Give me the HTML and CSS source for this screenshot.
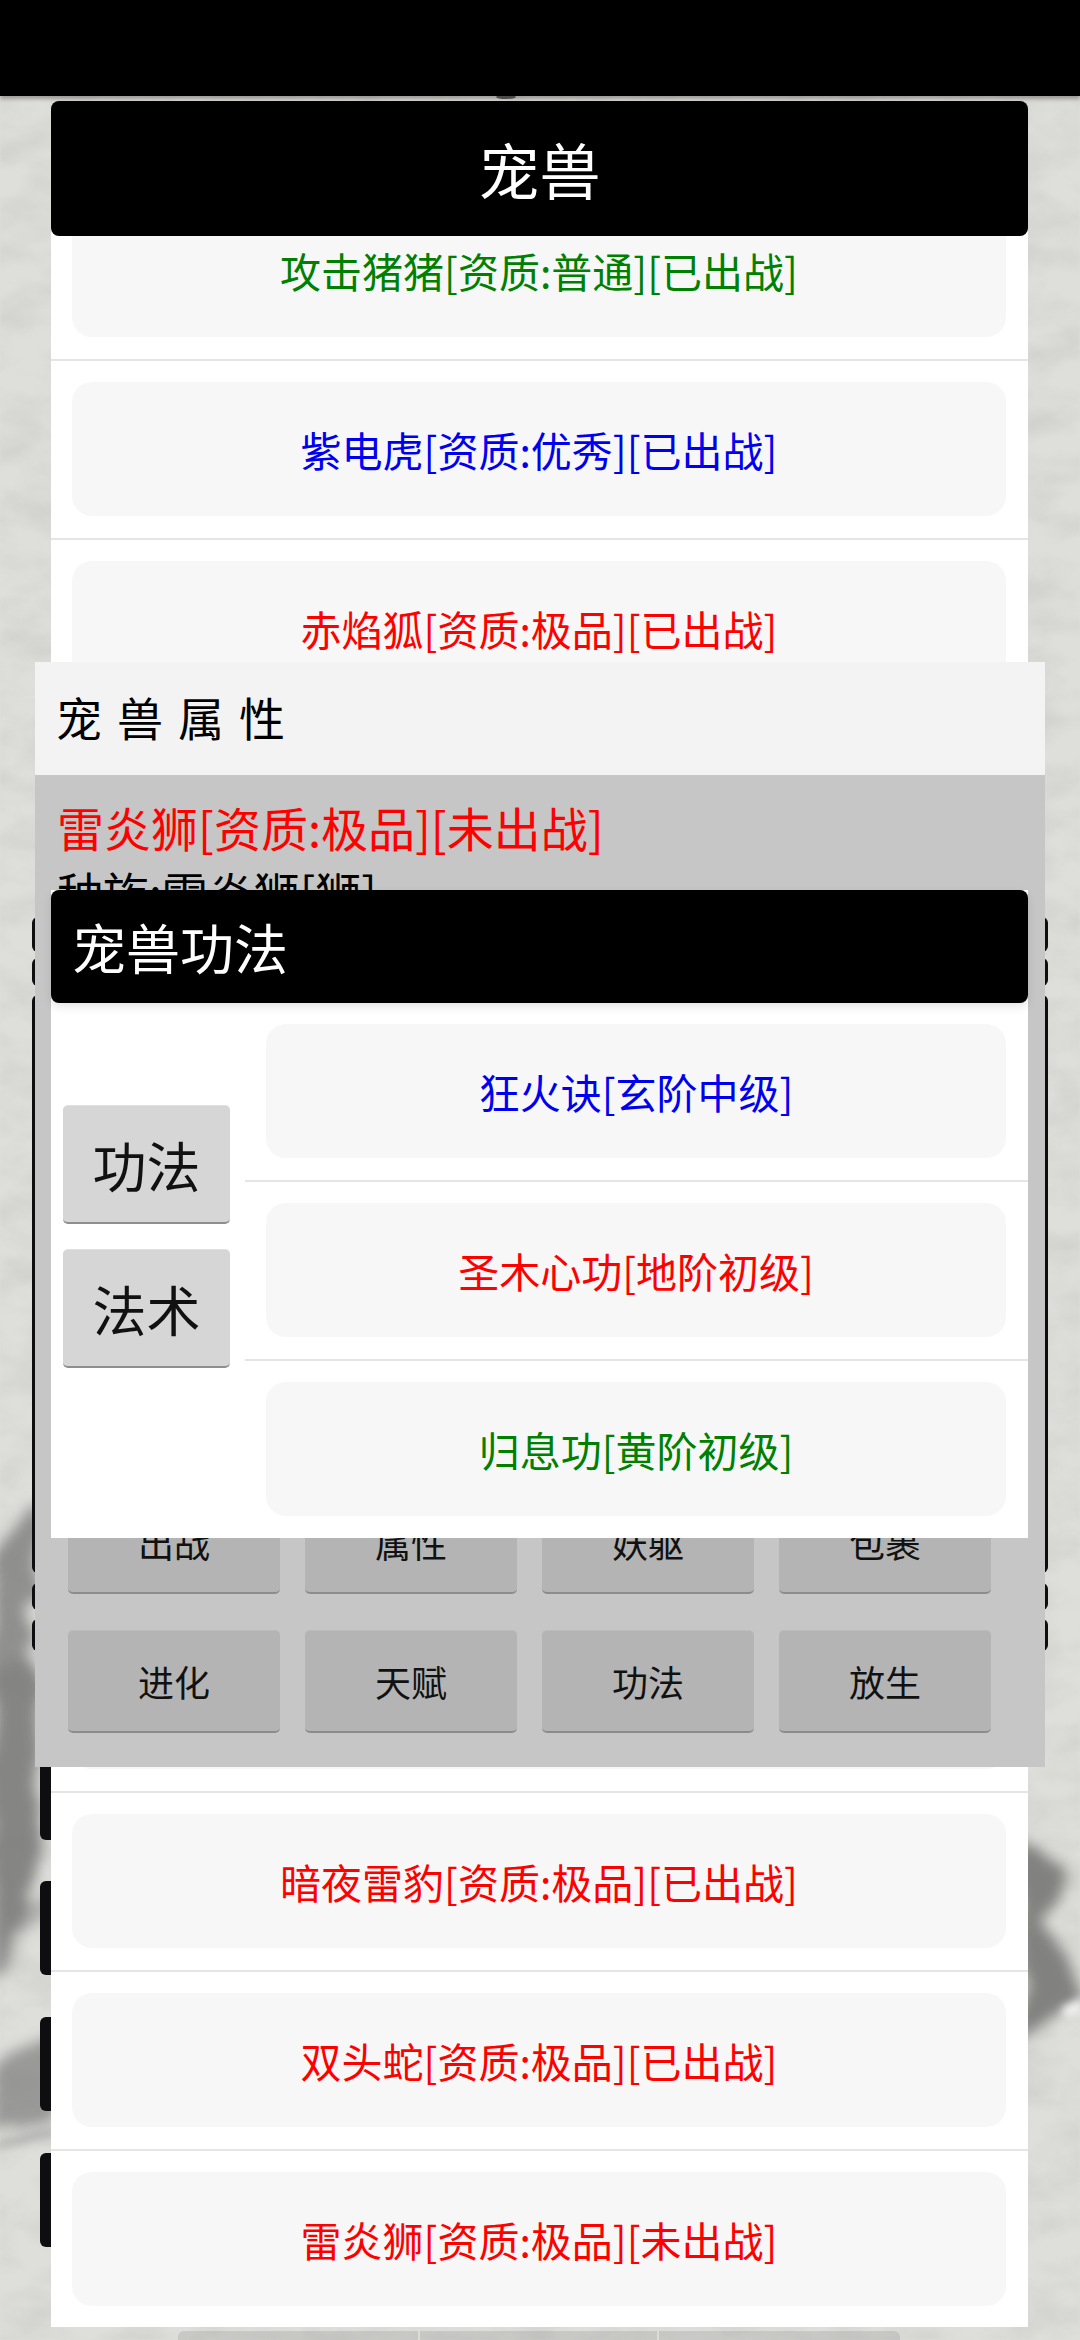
FILE: index.html
```html
<!DOCTYPE html>
<html lang="zh">
<head>
<meta charset="utf-8">
<title>宠兽</title>
<link rel="stylesheet" href="styles.css">
</head>
<body>
<div class="screen">
  <svg class="paper" viewBox="0 0 1080 2340" aria-hidden="true">
    <defs>
      <filter id="grain" x="0" y="0" width="100%" height="100%">
        <feTurbulence type="fractalNoise" baseFrequency="0.018 0.03" numOctaves="5" seed="11"/>
        <feColorMatrix type="matrix" values="0 0 0 0 0.42  0 0 0 0 0.42  0 0 0 0 0.40  1.5 0 0 0 -0.52"/>
        <feGaussianBlur stdDeviation="1.2"/>
      </filter>
      <filter id="ink" x="-30%" y="-30%" width="160%" height="160%">
        <feTurbulence type="fractalNoise" baseFrequency="0.02" numOctaves="4" seed="4" result="n"/>
        <feDisplacementMap in="SourceGraphic" in2="n" scale="30" result="d"/>
        <feGaussianBlur in="d" stdDeviation="7"/>
      </filter>
      <filter id="soft" x="-40%" y="-40%" width="180%" height="180%">
        <feGaussianBlur stdDeviation="4"/>
      </filter>
    </defs>
    <rect width="1080" height="2340" fill="#dededb"/>
    <rect width="1080" height="2340" filter="url(#grain)" opacity="0.32"/>
    <g filter="url(#ink)" fill="#7c7c7a">
      <polygon points="30,1505 46,1515 42,1600 16,1660 -10,1700 -10,1560" opacity="0.8"/>
      <polygon points="-10,1690 22,1650 42,1680 38,1780 36,1870 26,1930 -10,1980" opacity="0.9"/>
      <polygon points="60,1878 60,1900 20,1955 -10,1990 -10,1960" opacity="0.45"/>
      <polygon points="60,2020 60,2125 -10,2130 -10,2065" opacity="0.7"/>
      <polygon points="1020,1843 1060,1862 1066,1885 1044,1925 1068,1960 1078,2000 1060,2015 1020,2045" opacity="0.95"/>
    </g>
    <polygon points="1062,2008 1082,1998 1082,2014 1064,2018" fill="#f2f2f0" filter="url(#soft)"/>
    <polygon points="-5,2142 60,2126 60,2134 -5,2150" fill="#6c6c6a" opacity="0.35" filter="url(#soft)"/>
    <ellipse cx="506" cy="97" rx="10" ry="2" fill="#555"/>
  </svg>

  <span class="edge edge-a"></span>
  <span class="edge edge-b"></span>
  <span class="edge edge-c"></span>
  <span class="edge edge-d"></span>
  <span class="edge edge-e"></span>
  <span class="block block-a"></span>
  <span class="block block-b"></span>
  <span class="block block-c"></span>
  <span class="block block-d"></span>
  <span class="tab tab-a"></span>
  <span class="tab tab-b"></span>
  <span class="tab tab-c"></span>

  <div class="statusbar"></div>

  <main class="panel">
    <h1 class="panel-head">宠兽</h1>
    <div class="list">
      <div class="row"><div class="card green">攻击猪猪[资质:普通][已出战]</div></div>
      <div class="row"><div class="card blue">紫电虎[资质:优秀][已出战]</div></div>
      <div class="row"><div class="card red">赤焰狐[资质:极品][已出战]</div></div>
      <div class="row"><div class="card"></div></div>
      <div class="row"><div class="card"></div></div>
      <div class="row"><div class="card"></div></div>
      <div class="row"><div class="card"></div></div>
      <div class="row"><div class="card"></div></div>
      <div class="row"><div class="card"></div></div>
      <div class="row"><div class="card red">暗夜雷豹[资质:极品][已出战]</div></div>
      <div class="row"><div class="card red">双头蛇[资质:极品][已出战]</div></div>
      <div class="row"><div class="card red">雷炎狮[资质:极品][未出战]</div></div>
    </div>
  </main>

  <section class="attr">
    <h2 class="attr-head">宠兽属性</h2>
    <div class="attr-body">
      <div class="attr-info">
        <p class="attr-name">雷炎狮[资质:极品][未出战]</p>
        <p class="attr-line">种族:雷炎狮[狮]</p>
      </div>
      <div class="attr-actions">
        <button class="act">出战</button>
        <button class="act">属性</button>
        <button class="act">妖躯</button>
        <button class="act">包裹</button>
        <button class="act">进化</button>
        <button class="act">天赋</button>
        <button class="act">功法</button>
        <button class="act">放生</button>
      </div>
    </div>
  </section>

  <section class="skills">
    <h2 class="skills-head">宠兽功法</h2>
    <div class="skills-body">
      <div class="skills-side">
        <button class="side-btn">功法</button>
        <button class="side-btn">法术</button>
      </div>
      <div class="skills-list">
        <div class="row"><div class="card blue">狂火诀[玄阶中级]</div></div>
        <div class="row"><div class="card red">圣木心功[地阶初级]</div></div>
        <div class="row"><div class="card green">归息功[黄阶初级]</div></div>
      </div>
    </div>
  </section>
</div>
</body>
</html>
```
FILE: styles.css
```css
* { box-sizing: border-box; }

html, body {
  margin: 0;
  padding: 0;
  width: 1080px;
  height: 2340px;
  overflow: hidden;
  background: #dededb;
  font-family: "Noto Sans CJK SC", "Noto Sans", sans-serif;
}

.screen {
  position: relative;
  width: 1080px;
  height: 2340px;
  overflow: hidden;
}

.paper {
  position: absolute;
  inset: 0;
  width: 1080px;
  height: 2340px;
}

.statusbar {
  position: relative;
  height: 96px;
  background: #000;
  box-shadow: 0 3px 4px rgba(60, 55, 50, 0.4);
}

/* edges of the layers lying behind the dialogs */
.edge {
  position: absolute;
  left: 32px;
  width: 1016px;
  background: #0e0e10;
  border-radius: 6px;
}
.edge-a { top: 917px; height: 35px; }
.edge-b { top: 958px; height: 28px; }
.edge-c { top: 995px; height: 578px; }
.edge-d { top: 1583px; height: 27px; }
.edge-e { top: 1619px; height: 32px; }

.block {
  position: absolute;
  left: 40px;
  width: 60px;
  background: #0e0e10;
  border-radius: 6px 0 0 6px;
}
.block-a { top: 1740px; height: 100px; }
.block-b { top: 1881px; height: 94px; }
.block-c { top: 2017px; height: 94px; }
.block-d { top: 2153px; height: 94px; }

.tab {
  position: absolute;
  top: 2331px;
  height: 9px;
  background: rgba(120, 120, 118, 0.2);
}
.tab-a { left: 178px; width: 240px; border-radius: 6px 0 0 0; }
.tab-b { left: 420px; width: 237px; }
.tab-c { left: 659px; width: 241px; border-radius: 0 6px 0 0; }

.panel {
  position: relative;
  margin: 5px 52px 0 51px;
}

.panel-head {
  position: relative;
  z-index: 1;
  margin: 0;
  height: 135px;
  background: #000;
  color: #fff;
  border-radius: 8px;
  font-size: 61px;
  font-weight: 400;
  line-height: 135px;
  text-align: center;
}

.list {
  margin-top: -54px;
  background: #fff;
}

.row {
  padding: 21px 22px 22px 21px;
  border-bottom: 2px solid #e5e5e5;
}
.row:last-child {
  border-bottom: 0;
  padding-bottom: 21px;
}

.card {
  display: flex;
  align-items: center;
  justify-content: center;
  height: 134px;
  background: #f7f7f7;
  border-radius: 20px;
  font-size: 41px;
  line-height: 1;
}

.green { color: #008000; }
.blue { color: #0000f0; }
.red { color: #f00; }

.attr {
  position: absolute;
  left: 35px;
  top: 662px;
  width: 1010px;
  height: 1105px;
  display: flex;
  flex-direction: column;
}

.attr-head {
  margin: 0;
  height: 113px;
  padding: 0 0 5px 21px;
  background: #f3f3f3;
  color: #000;
  font-size: 46px;
  font-weight: 400;
  letter-spacing: 15px;
  line-height: 108px;
}

.attr-body {
  flex: 1;
  display: flex;
  flex-direction: column;
  justify-content: space-between;
  padding: 20px 54px 34px 33px;
  background: #c6c6c6;
}

.attr-info {
  margin-left: -11px;
}

.attr-name,
.attr-line {
  margin: 0;
  font-size: 47px;
  line-height: 64px;
}
.attr-name { color: #f00; }
.attr-line { color: #000; font-size: 46px; }

.attr-actions {
  display: grid;
  grid-template-columns: repeat(4, 212px);
  grid-auto-rows: 103px;
  column-gap: 25px;
  row-gap: 36px;
}

.act {
  border: 0;
  border-top: 1px solid #bcbcbc;
  border-bottom: 2px solid #8c8c8c;
  border-radius: 5px;
  padding: 0;
  background: #b4b4b4;
  color: #111;
  font: inherit;
  font-size: 36px;
}

.skills {
  position: absolute;
  left: 51px;
  top: 890px;
  width: 977px;
  height: 648px;
  background: #fff;
}

.skills-head {
  margin: 0;
  height: 113px;
  padding-left: 21px;
  background: #000;
  color: #fff;
  border-radius: 8px;
  box-shadow: 0 4px 10px rgba(0, 0, 0, 0.1);
  font-size: 54px;
  font-weight: 400;
  line-height: 113px;
}

.skills-body {
  display: flex;
}

.skills-side {
  width: 194px;
  flex: none;
  padding: 102px 0 0 12px;
  display: flex;
  flex-direction: column;
  gap: 25px;
}

.side-btn {
  width: 167px;
  height: 119px;
  border: 0;
  border-top: 1px solid #e0e0e0;
  border-bottom: 2px solid #8e8e8e;
  border-radius: 5px;
  padding: 0;
  background: #d6d6d6;
  color: #111;
  font: inherit;
  font-size: 54px;
}

.skills-list {
  flex: 1;
  min-width: 0;
}
```
